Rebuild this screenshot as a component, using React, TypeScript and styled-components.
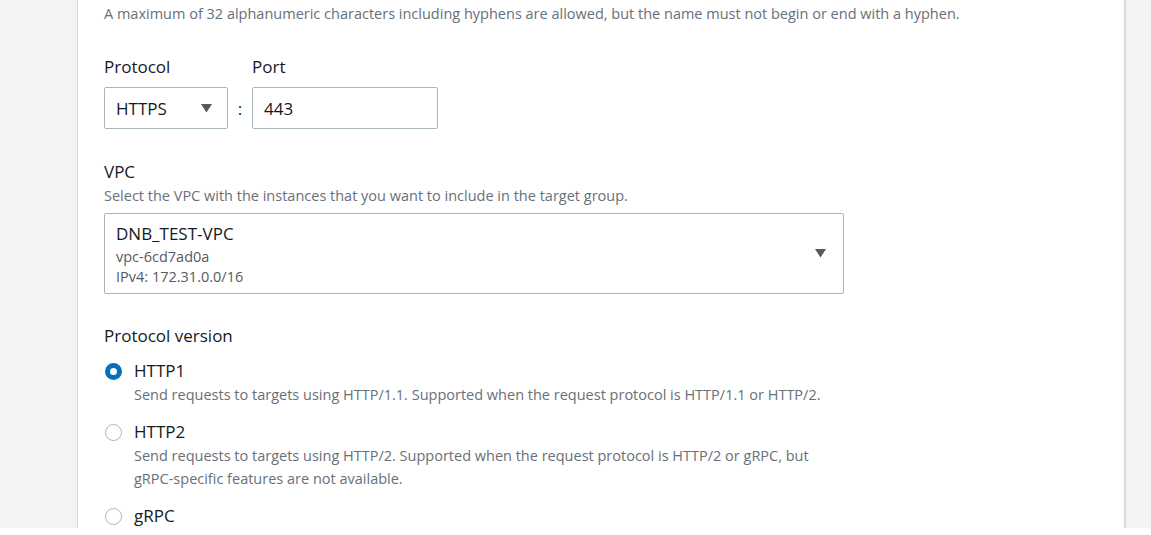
import React from "react";
import styled, { createGlobalStyle } from "styled-components";

const Global = createGlobalStyle`
  html, body { margin: 0; padding: 0; background: #ffffff; }
  body { font-family: "Open Sans", "Noto Sans", sans-serif; color: #16191f; }
`;

const Page = styled.div`
  display: grid;
  grid-template-columns: 78px 1fr 27px;
  height: 528px;
  overflow: hidden;
`;

const Side = styled.div<{ $side: "left" | "right" }>`
  background: #f2f3f3;
  ${(p) => (p.$side === "left" ? "border-right: 1px solid #d5dbdb;" : "border-left: 2px solid #d5dbdb;")}
`;

const Content = styled.div`
  background: #ffffff;
  padding: 0 0 0 26px;
  display: flex;
  flex-direction: column;
`;

const Hint = styled.div<{ $top?: number }>`
  font-size: 14.5px;
  line-height: 20px;
  color: #687078;
  margin-top: ${(p) => p.$top ?? 0}px;
  white-space: nowrap;
`;

const Label = styled.div`
  font-size: 17px;
  line-height: 22px;
  color: #16191f;
`;

const PortRow = styled.div`
  display: grid;
  grid-template-columns: 124px 24px 186px;
  margin-top: 32px;
  row-gap: 9px;
`;

const Box = styled.div`
  box-sizing: border-box;
  height: 42px;
  border: 1px solid #aab7b8;
  border-radius: 2px;
  display: flex;
  align-items: center;
  padding: 0 15px 0 11px;
  font-size: 17px;
  color: #16191f;
`;

const SelectBox = styled(Box)`
  justify-content: space-between;
`;

const Colon = styled.div`
  display: flex;
  align-items: center;
  justify-content: center;
  font-size: 17px;
`;

const Caret = () => (
  <svg width="11" height="9" viewBox="0 0 11 9">
    <path d="M0 0 H11 L5.5 8.5 Z" fill="#545b64" />
  </svg>
);

const Section = styled.div<{ $top: number }>`
  margin-top: ${(p) => p.$top}px;
  display: flex;
  flex-direction: column;
`;

const SectionHint = styled(Hint)`
  margin-top: 3px;
`;

const VpcBox = styled.div`
  box-sizing: border-box;
  width: 740px;
  height: 81px;
  margin-top: 7px;
  border: 1px solid #aab7b8;
  border-radius: 2px;
  display: flex;
  align-items: center;
  justify-content: space-between;
  padding: 0 17px 0 11px;
`;

const VpcText = styled.div`
  display: flex;
  flex-direction: column;
  align-self: flex-start;
  padding-top: 9px;
`;

const VpcName = styled.div`
  font-size: 17px;
  line-height: 22px;
  color: #16191f;
  margin-bottom: 2px;
`;

const VpcMeta = styled.div`
  font-size: 14.5px;
  line-height: 20px;
  color: #545b64;
`;

const RadioList = styled.div`
  display: flex;
  flex-direction: column;
  margin-top: 13px;
  gap: 16px;
`;

const RadioItem = styled.div`
  display: grid;
  grid-template-columns: 30px 1fr;
  align-items: start;
`;

const RadioCircle = styled.div<{ $checked?: boolean }>`
  box-sizing: border-box;
  width: 17px;
  height: 17px;
  margin-top: 3px;
  margin-left: 1px;
  border-radius: 50%;
  border: ${(p) => (p.$checked ? "5px solid #0073bb" : "1.5px solid #aab7b8")};
  background: #ffffff;
`;

const RadioBody = styled.div`
  display: flex;
  flex-direction: column;
`;

const RadioDesc = styled.div`
  font-size: 14.5px;
  line-height: 21px;
  color: #687078;
  margin-top: 2px;
  white-space: nowrap;
`;

const Radio = ({ label, desc, checked }: { label: string; desc?: string[]; checked?: boolean }) => (
  <RadioItem>
    <RadioCircle $checked={checked} />
    <RadioBody>
      <Label>{label}</Label>
      {desc && desc.map((line) => <RadioDesc key={line}>{line}</RadioDesc>)}
    </RadioBody>
  </RadioItem>
);

export default function App() {
  return (
    <>
      <Global />
      <Page>
        <Side $side="left" />
        <Content>
          <Hint $top={4}>
            A maximum of 32 alphanumeric characters including hyphens are allowed, but the name must not begin or end with a hyphen.
          </Hint>
          <PortRow>
            <Label>Protocol</Label>
            <div />
            <Label>Port</Label>
            <SelectBox>
              HTTPS
              <Caret />
            </SelectBox>
            <Colon>:</Colon>
            <Box>443</Box>
          </PortRow>
          <Section $top={32}>
            <Label>VPC</Label>
            <SectionHint>Select the VPC with the instances that you want to include in the target group.</SectionHint>
            <VpcBox>
              <VpcText>
                <VpcName>DNB_TEST-VPC</VpcName>
                <VpcMeta>vpc-6cd7ad0a</VpcMeta>
                <VpcMeta>IPv4: 172.31.0.0/16</VpcMeta>
              </VpcText>
              <Caret />
            </VpcBox>
          </Section>
          <Section $top={31}>
            <Label>Protocol version</Label>
            <RadioList>
              <Radio
                checked
                label="HTTP1"
                desc={["Send requests to targets using HTTP/1.1. Supported when the request protocol is HTTP/1.1 or HTTP/2."]}
              />
              <Radio
                label="HTTP2"
                desc={[
                  "Send requests to targets using HTTP/2. Supported when the request protocol is HTTP/2 or gRPC, but",
                  "gRPC-specific features are not available.",
                ]}
              />
              <Radio label="gRPC" />
            </RadioList>
          </Section>
        </Content>
        <Side $side="right" />
      </Page>
    </>
  );
}
